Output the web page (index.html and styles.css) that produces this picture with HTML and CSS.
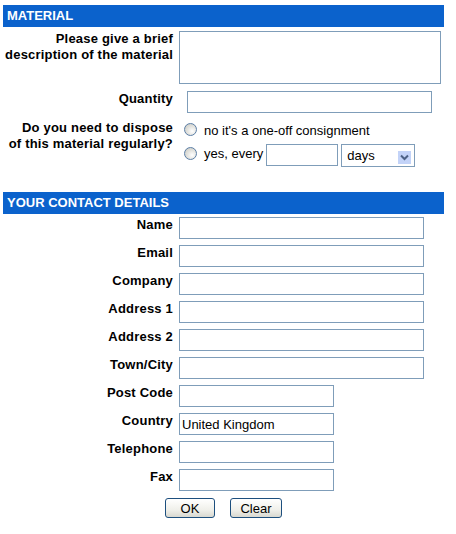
FILE: index.html
```html
<!DOCTYPE html>
<html>
<head>
    <title>Waste Collection Request</title>
    <link rel="stylesheet" href="styles.css">
</head>
<body>
    <form class="form">
        <div class="bar">MATERIAL</div>
        <div class="section material">
            <div class="row">
                <label for="desc">Please give a brief<br>description of the material</label>
                <textarea id="desc" class="desc"></textarea>
            </div>
            <div class="row row-qty">
                <label for="qty">Quantity</label>
                <input type="text" id="qty" class="qty">
            </div>
            <div class="row row-dispose">
                <label>Do you need to dispose<br>of this material regularly?</label>
                <div class="options">
                    <div class="option option-once">
                        <input type="radio" name="regular" id="once">
                        <span>no it's a one-off consignment</span>
                    </div>
                    <div class="option option-every">
                        <input type="radio" name="regular" id="every">
                        <span>yes, every</span>
                        <input type="text" class="every">
                        <div class="combo">
                            <select class="period">
                                <option>days</option>
                                <option>weeks</option>
                                <option>months</option>
                            </select>
                            <span class="combo-btn">
                                <svg width="9" height="7" viewBox="0 0 9 7">
                                    <path d="M1 1.5 L4.5 5 L8 1.5" fill="none" stroke="#4d6185" stroke-width="2"/>
                                </svg>
                            </span>
                        </div>
                    </div>
                </div>
            </div>
        </div>

        <div class="bar">YOUR CONTACT DETAILS</div>
        <div class="section contact">
            <div class="row"><label>Name</label><input type="text" class="long"></div>
            <div class="row"><label>Email</label><input type="text" class="long"></div>
            <div class="row"><label>Company</label><input type="text" class="long"></div>
            <div class="row"><label>Address 1</label><input type="text" class="long"></div>
            <div class="row"><label>Address 2</label><input type="text" class="long"></div>
            <div class="row"><label>Town/City</label><input type="text" class="long"></div>
            <div class="row"><label>Post Code</label><input type="text" class="short"></div>
            <div class="row"><label>Country</label><input type="text" class="short" value="United Kingdom"></div>
            <div class="row"><label>Telephone</label><input type="text" class="short"></div>
            <div class="row"><label>Fax</label><input type="text" class="short"></div>
        </div>

        <div class="buttons">
            <button type="submit" class="btn btn-ok">OK</button>
            <button type="reset" class="btn btn-clear">Clear</button>
        </div>
    </form>
</body>
</html>
```

FILE: styles.css
```css
body {
    margin: 0;
    font-family: "Liberation Sans", Arial, sans-serif;
    font-size: 13px;
    color: #000;
    background: #fff;
}
.form {
    width: 441px;
    padding: 5px 0 0 3px;
}
.bar {
    height: 22px;
    line-height: 22px;
    padding-left: 4px;
    background: #0b62cc;
    color: #fff;
    font-weight: bold;
    font-size: 13px;
}
.section {
    display: flex;
    flex-direction: column;
}
.row {
    display: grid;
    grid-template-columns: 170px 1fr;
    column-gap: 6px;
    align-items: start;
}
.row label {
    text-align: right;
    font-weight: bold;
    line-height: 16px;
    letter-spacing: 0.2px;
    white-space: nowrap;
}
input[type="text"], textarea, select {
    box-sizing: border-box;
    margin: 0;
    border: 1px solid #7f9db9;
    background: #fff;
    font-family: "Liberation Sans", Arial, sans-serif;
    font-size: 13px;
    color: #000;
    padding: 0 2px;
    outline: none;
}
input[type="text"] {
    height: 22px;
}

/* material */
.material {
    margin-top: 4px;
    margin-bottom: 25px;
}
.desc {
    width: 262px;
    height: 53px;
    resize: none;
}
.row-qty {
    margin-top: 7px;
}
.qty {
    width: 245px;
    margin-left: 8px !important;
}
.row-dispose {
    margin-top: 7px;
}
.options {
    display: flex;
    flex-direction: column;
    gap: 6px;
}
.option {
    display: flex;
    align-items: flex-start;
}
.option span {
    line-height: 16px;
}
input[type="radio"] {
    appearance: none;
    box-sizing: border-box;
    width: 13px;
    height: 13px;
    margin: 3px 7px 0 5px;
    border: 1px solid #5b7ea6;
    border-radius: 50%;
    background: radial-gradient(circle at 65% 65%, #ffffff 0%, #e4e4e0 45%, #c4c4bc 100%);
}
.option-once {
    height: 18px;
}
.option-once span {
    margin-top: 3px;
}
.option-every input[type="radio"] {
    margin-top: 3px;
}
.option-every span {
    margin-top: 2px;
}
.every {
    width: 72px;
    margin-left: 3px !important;
}
.combo {
    position: relative;
    margin-left: 3px;
}
.period {
    appearance: none;
    width: 74px;
    height: 23px;
    padding-left: 5px;
    border-radius: 0;
}
.combo-btn {
    position: absolute;
    top: 5px;
    right: 4px;
    width: 13px;
    height: 13px;
    background: #c3d3f8;
    display: flex;
    align-items: center;
    justify-content: center;
    pointer-events: none;
}

/* contact */
.contact {
    margin-top: 3px;
    gap: 6px;
}
.long {
    width: 245px;
}
.short {
    width: 155px;
}
.buttons {
    display: flex;
    justify-content: center;
    gap: 15px;
    margin-top: 7px;
}
.btn {
    height: 20px;
    padding: 0;
    border: 1px solid #1d4f7e;
    border-radius: 3px;
    background: linear-gradient(#ffffff, #f0f0ea 60%, #d8d8d0);
    font-family: "Liberation Sans", Arial, sans-serif;
    font-size: 13px;
    color: #000;
}
.btn-ok {
    width: 50px;
}
.btn-clear {
    width: 52px;
}
```
